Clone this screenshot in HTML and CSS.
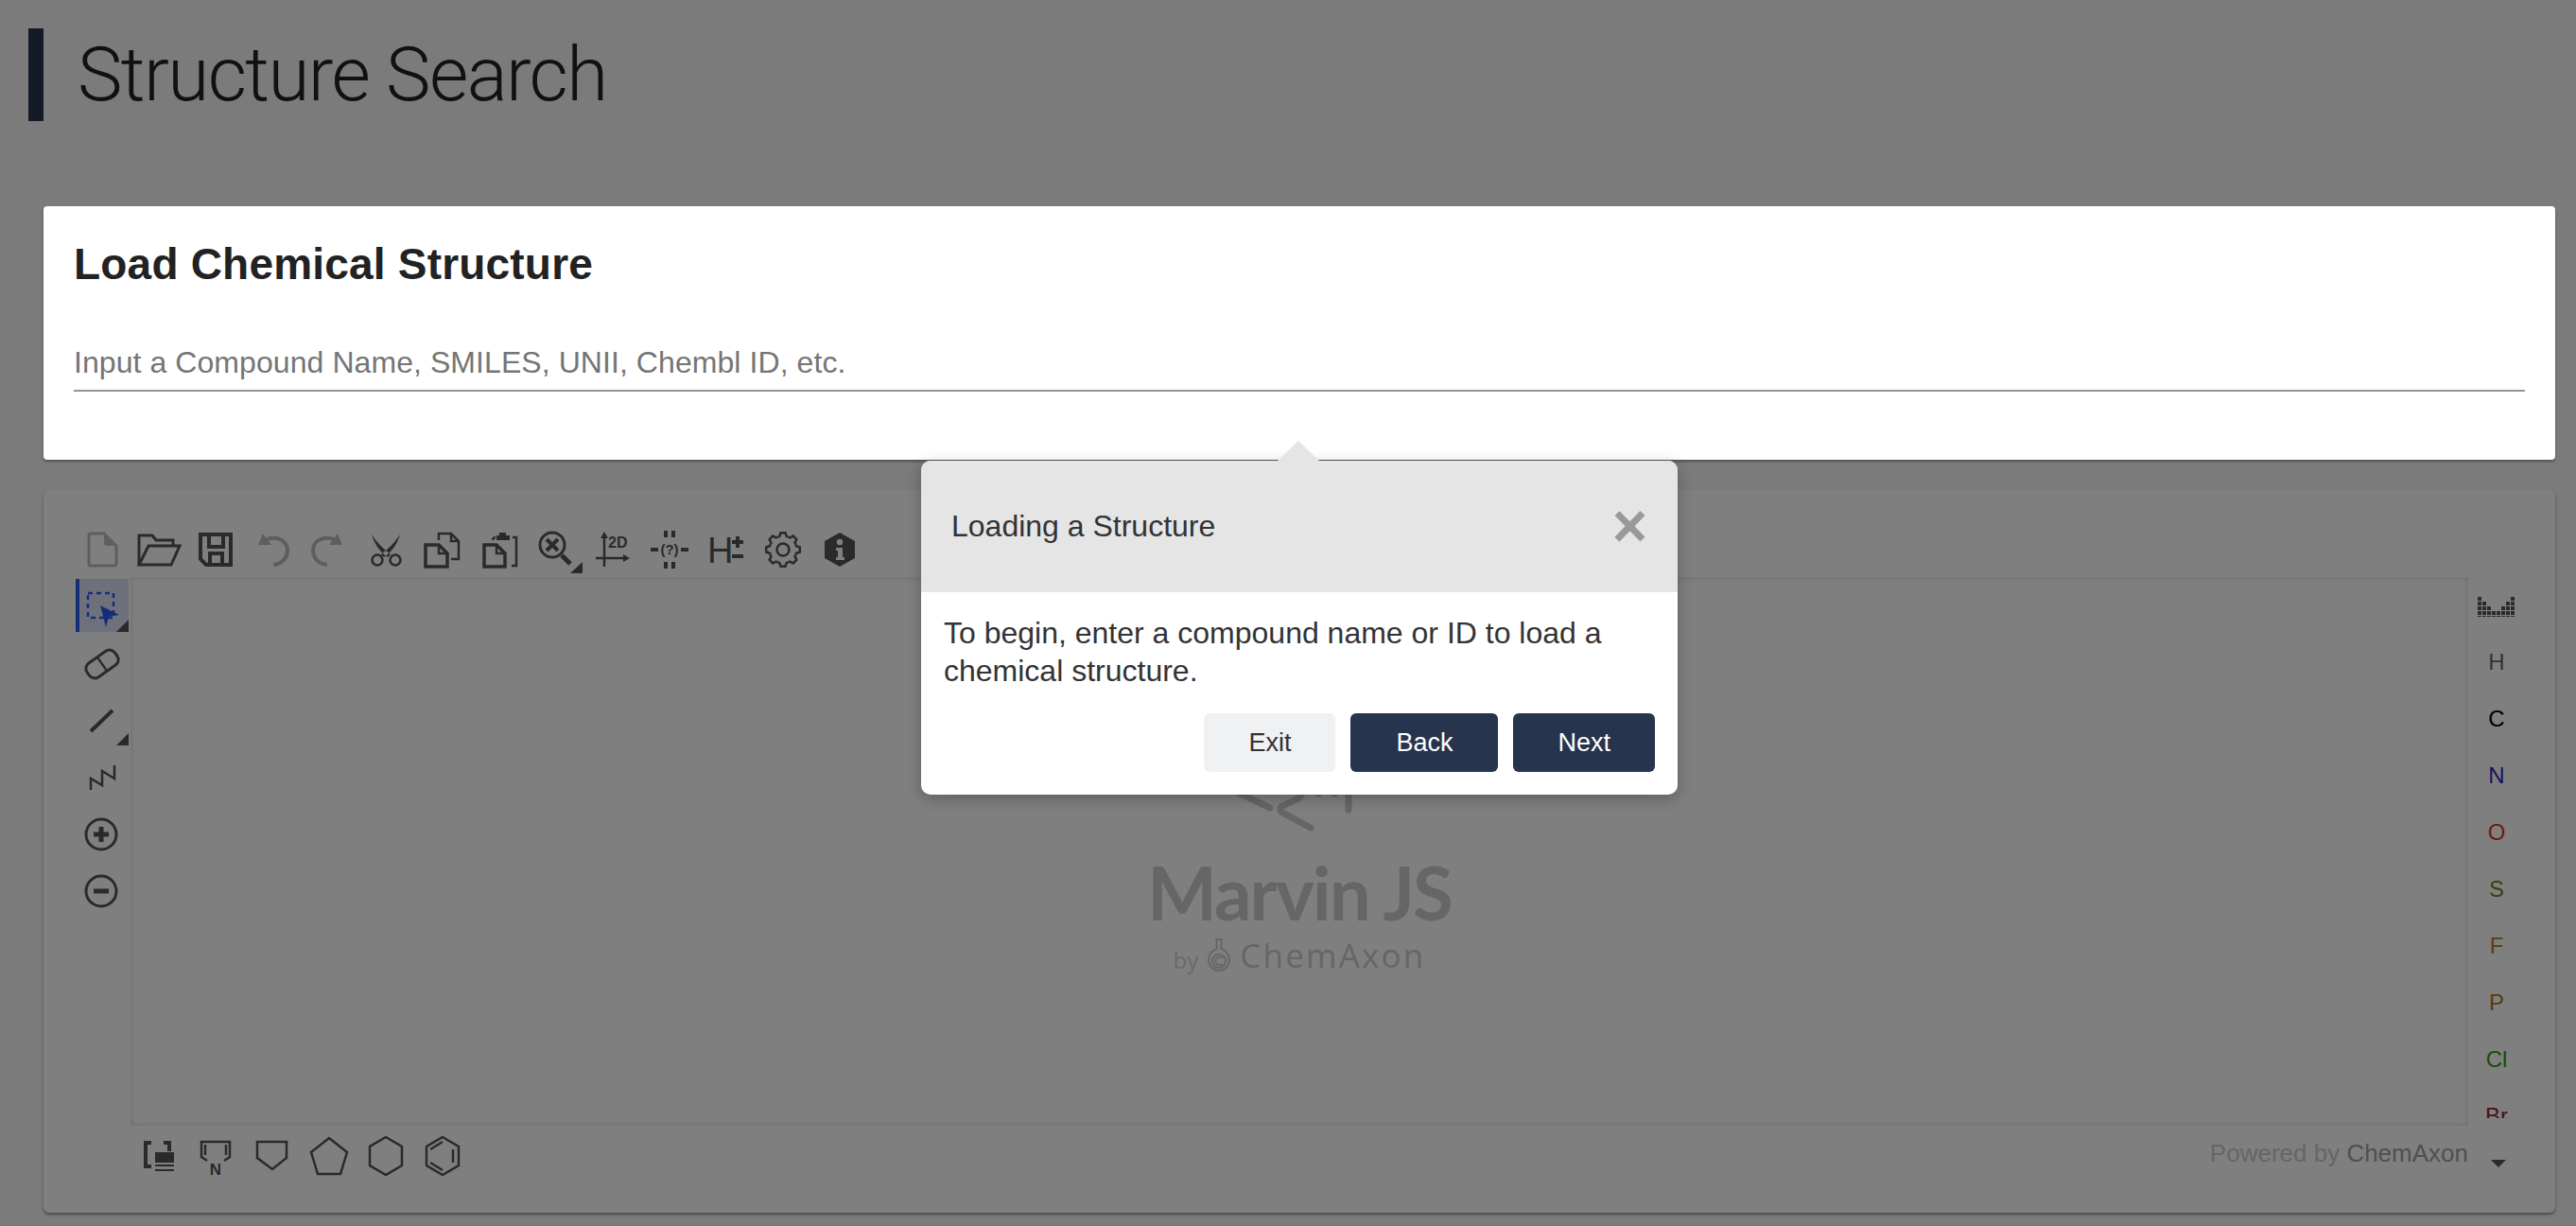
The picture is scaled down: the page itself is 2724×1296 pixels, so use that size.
FILE: index.html
```html
<!DOCTYPE html>
<html lang="en">
<head>
    <meta charset="UTF-8">
    <title>Structure Search</title>
    <link rel="stylesheet" href="styles.css">
</head>
<body>
    <h1 class="page-title">Structure Search</h1>

    <div class="load-card">
        <h2>Load Chemical Structure</h2>
        <div class="load-input">Input a Compound Name, SMILES, UNII, Chembl ID, etc.</div>
    </div>

    <div class="editor">
        <div class="top-tools">
            <svg class="cell" viewBox="0 0 60 60"><path class="ic off" d="M16 16a2 2 0 0 1 2-2h14l13 13v19a2 2 0 0 1-2 2H18a2 2 0 0 1-2-2z"/><path class="solid off" d="M32 14l13 13H35a3 3 0 0 1-3-3z"/></svg>
            <svg class="cell" viewBox="0 0 60 60"><path class="ic" d="M9 47V16h14l4 5h18v5M9 47l10-20h33l-9 20z"/></svg>
            <svg class="cell" viewBox="0 0 60 60"><path class="ic thick" d="M14 15h32v32H20l-6-6zM23 15v13h15V15M24 47V35h13v12"/></svg>
            <svg class="cell" viewBox="0 0 60 60"><path class="ic thick off" d="M31 47c11-1 15-9 15-15 0-10-10-16-22-12"/><path class="solid off" d="M15 26l5-12 9 12z"/></svg>
            <svg class="cell" viewBox="0 0 60 60"><g transform="matrix(-1 0 0 1 59 0)"><path class="ic thick off" d="M31 47c11-1 15-9 15-15 0-10-10-16-22-12"/><path class="solid off" d="M15 26l5-12 9 12z"/></g></svg>
            <svg class="cell" viewBox="0 0 60 60"><circle class="ic thin" cx="21" cy="42" r="5.500"/><circle class="ic thin" cx="40" cy="42" r="5.500"/><path class="solid" d="M15 15c5 8 12 15 20 21l-3 3c-8-5-14-14-17-24zM45 15c-5 8-12 15-20 21l3 3c8-5 14-14 17-24z"/></svg>
            <svg class="cell" viewBox="0 0 60 60"><path class="ic thin" d="M26 21v-7h13l8 8v19h-8M39 14v8h8"/><path class="ic mid" d="M12 26h14l9 9v14H12z"/><path class="ic thin" d="M26 26v9h9"/></svg>
            <svg class="cell" viewBox="0 0 60 60"><path class="ic thin" d="M44 18h4v30h-5M23 21c0-2 2-3 3-3"/><path class="solid" d="M27 16h3v-3h7v3h4v5H27z"/><path class="ic mid" d="M14 26h13l9 9v14H14z"/><path class="ic thin" d="M27 26v9h9"/></svg>
            <svg class="cell wide" viewBox="0 0 60 60"><circle class="ic" cx="26" cy="26" r="13"/><path class="ic thick" d="M20 20l12 12M32 20L20 32"/><path class="ic fat" d="M36 37l9 9"/><path class="solid" d="M45 56h13V44z"/></svg>
            <svg class="cell" viewBox="0 0 60 60"><path class="ic thin" d="M21 18v31M12 40h31"/><path class="solid" d="M21 12l-4 7h8zM48 40l-7-4v8z"/><text class="ic-text two-d" x="25" y="29">2D</text></svg>
            <svg class="cell" viewBox="0 0 60 60"><path class="solid" d="M24 11h4v7h-4zM32 11h4v7h-4zM24 44h4v7h-4zM32 44h4v7h-4zM10 29h8v4h-8zM42 29h8v4h-8z"/><text class="ic-text unknown" x="30" y="36" text-anchor="middle">(?)</text></svg>
            <svg class="cell" viewBox="0 0 60 60"><text class="ic-text hydrogen" x="10" y="45">H</text><path class="solid" d="M40 17h4v4h4v4h-4v4h-4v-4h-4v-4h4zM36 36h12v4H36z"/></svg>
            <svg class="cell" viewBox="0 0 60 60"><g transform="translate(30 31)"><circle class="ic thin" r="6.500"/><g id="tooth"><polyline class="ic thin" points="-5.500,-13.400 -3.750,-14 -2.500,-17.800 2.500,-17.800 3.750,-14 5.500,-13.400"/></g><use href="#tooth" transform="rotate(45)"/><use href="#tooth" transform="rotate(90)"/><use href="#tooth" transform="rotate(135)"/><use href="#tooth" transform="rotate(180)"/><use href="#tooth" transform="rotate(225)"/><use href="#tooth" transform="rotate(270)"/><use href="#tooth" transform="rotate(315)"/></g></svg>
            <svg class="cell" viewBox="0 0 60 60"><path class="solid" d="M30 13l16 9v18l-16 9-16-9V22z"/><circle class="blank" cx="30" cy="23" r="3.200"/><path class="blank" d="M26 29h7v10h2v3H26v-3h2v-7h-2z"/></svg>
        </div>

        <div class="left-tools">
            <div class="left-tool active">
                <svg viewBox="0 0 56 56"><rect class="dash" x="13" y="15" width="27" height="26"/><path class="arrow" d="M26 28l20 10-11 2-3 11z"/><path class="solid" d="M43 56h13V43z"/></svg>
            </div>
            <div class="left-tool">
                <svg viewBox="0 0 56 56"><g transform="rotate(-35 28 30)"><rect class="ic" x="10" y="21" width="36" height="18" rx="7"/><path class="ic thin" d="M28 21v18"/></g></svg>
            </div>
            <div class="left-tool">
                <svg viewBox="0 0 56 56"><path class="ic thick" d="M16 41l23-22"/><path class="solid" d="M43 56h13V43z"/></svg>
            </div>
            <div class="left-tool">
                <svg viewBox="0 0 56 56"><path class="ic thin" d="M16 43V31l12 7V23l13 8V17"/></svg>
            </div>
            <div class="left-tool">
                <svg viewBox="0 0 56 56"><circle class="ic" cx="27" cy="30" r="16"/><path class="ic fat" d="M19 30h16M27 22v16"/></svg>
            </div>
            <div class="left-tool">
                <svg viewBox="0 0 56 56"><circle class="ic" cx="27" cy="30" r="16"/><path class="ic fat" d="M19 30h16"/></svg>
            </div>
        </div>

        <div class="canvas">
            <svg class="logo-mark" viewBox="0 0 148 50"><path class="logo-line" d="M6 6l37 18M86 45L56 29c-3-2-3-5 0-7l17-8c3-2 4-5 4-8M126 6v20"/><circle class="logo-dot" cx="94" cy="9" r="3.500"/><circle class="logo-dot" cx="111" cy="9" r="3.500"/></svg>
            <div class="logo-name">Marvin JS</div>
            <div class="logo-by">
                <span class="by">by</span>
                <svg class="flask" viewBox="0 0 24 36"><path class="flask-line" d="M8 1h8M9.500 1v10C4 13 1 18 1 23a11 11 0 0 0 22 0c0-5-3-10-8.500-12V1"/><circle class="flask-line" cx="12" cy="24" r="7"/><path class="flask-line" d="M15 21a4 4 0 1 0 0 6"/></svg>
                <span class="maker">ChemAxon</span>
            </div>
        </div>

        <div class="atoms">
            <div class="atom">
                <svg class="table-icon" viewBox="0 0 40 21"><path d="M2 0v21M7 5v16M12 10v11M17 15v6M22 15v6M27 10v11M32 5v16M37 0v21"/></svg>
            </div>
            <div class="atom el-h">H</div>
            <div class="atom el-c">C</div>
            <div class="atom el-n">N</div>
            <div class="atom el-o">O</div>
            <div class="atom el-s">S</div>
            <div class="atom el-f">F</div>
            <div class="atom el-p">P</div>
            <div class="atom el-cl">Cl</div>
            <div class="atom el-br">Br</div>
        </div>

        <div class="bottom-bar">
            <div class="bottom-tools">
                <svg class="cell" viewBox="0 0 60 60"><path class="ic thick" d="M22 16h-6v25h6M35 16h6v9"/><path class="solid" d="M26 26h20v11H26zM26 39h20v2H26zM26 44h20v2H26z"/></svg>
                <svg class="cell" viewBox="0 0 60 60"><path class="ic thin" d="M21 35l-6-4V15h30v16l-6 4M19 18v11M41 18v11"/><text class="ic-text nitrogen" x="30" y="50" text-anchor="middle">N</text></svg>
                <svg class="cell" viewBox="0 0 60 60"><path class="ic thin" d="M14 15h31v17L30 44 14 32z"/></svg>
                <svg class="cell" viewBox="0 0 60 60"><path class="ic thin" d="M30 11l19 15-7 23H18l-7-23z"/></svg>
                <svg class="cell" viewBox="0 0 60 60"><path class="ic thin" d="M30 10l17 10v20L30 50 13 40V20z"/></svg>
                <svg class="cell" viewBox="0 0 60 60"><path class="ic thin" d="M30 10l17 10v20L30 50 13 40V20zM41 23v14M17 23l13-8M17 37l13 8"/></svg>
            </div>
            <div class="powered">Powered by <span>ChemAxon</span></div>
        </div>
        <div class="atoms-more"><span class="down"></span></div>
    </div>

    <div class="backdrop"></div>

    <div class="tour-popover">
        <div class="tour-header">
            <span>Loading a Structure</span>
            <span class="tour-close">×</span>
        </div>
        <div class="tour-body">To begin, enter a compound name or ID to load a chemical structure.</div>
        <div class="tour-actions">
            <button class="btn-light">Exit</button>
            <button class="btn-dark btn-back">Back</button>
            <button class="btn-dark">Next</button>
        </div>
    </div>
</body>
</html>
```

FILE: styles.css
```css
* {
    box-sizing: border-box;
}
body {
    font-family: "Liberation Sans", Arial, sans-serif;
    background: #f6f6f6;
    margin: 0;
    height: 1296px;
    overflow: hidden;
    position: relative;
}
.page-title {
    margin: 30px 0 0 30px;
    height: 98px;
    line-height: 98px;
    padding-left: 36px;
    border-left: 16px solid #27344d;
    font-family: Roboto, "Liberation Sans", sans-serif;
    font-size: 80px;
    font-weight: 300;
    letter-spacing: -1.600px;
    color: #222;
}
.load-card {
    position: relative;
    z-index: 2;
    height: 268px;
    margin: 90px 22px 0 46px;
    padding: 33px 32px 0;
    background: #fff;
    border-radius: 4px;
    box-shadow: 0 2px 3px rgba(0, 0, 0, 0.35);
}
.load-card h2 {
    margin: 0;
    font-size: 46px;
    line-height: 56px;
    letter-spacing: 0.200px;
    color: #222;
}
.load-input {
    margin-top: 56px;
    height: 51px;
    line-height: 40px;
    font-size: 32px;
    letter-spacing: 0.070px;
    color: #757575;
    border-bottom: 2px solid #949494;
}
.editor {
    display: grid;
    grid-template-columns: 92px 1fr 92px;
    grid-template-rows: 92px 580px 92px;
    height: 764px;
    margin: 32px 22px 0 46px;
    background: #fff;
    border-radius: 6px;
    box-shadow: 0 2px 3px rgba(0, 0, 0, 0.4);
}
.top-tools {
    grid-column: 1 / 4;
    display: flex;
    align-items: flex-end;
    padding-left: 32px;
}
.cell {
    width: 60px;
    height: 60px;
    flex: none;
}
.wide {
    overflow: visible;
}
.ic {
    fill: none;
    stroke: #555;
    stroke-width: 3;
}
.thin {
    stroke-width: 2.500;
}
.mid {
    stroke-width: 3.500;
}
.thick {
    stroke-width: 4;
}
.fat {
    stroke-width: 5;
}
.solid {
    fill: #555;
}
.blank {
    fill: #fff;
}
.ic.off {
    stroke: #bdbdbd;
}
.solid.off {
    fill: #bdbdbd;
}
.ic-text {
    fill: #555;
    font-weight: 700;
}
.two-d {
    font-size: 16px;
}
.unknown {
    font-size: 15px;
}
.hydrogen {
    font-size: 38px;
    font-weight: 400;
}
.nitrogen {
    font-size: 17px;
}
.left-tools {
    grid-column: 1;
    grid-row: 2;
    padding-left: 34px;
}
.left-tool {
    width: 56px;
    height: 56px;
    margin: 2px 0 4px;
}
.left-tool svg {
    display: block;
    width: 56px;
    height: 56px;
}
.active {
    background: #dde3f8;
    border-left: 4px solid #2a5cf0;
}
.active svg {
    margin-left: -4px;
}
.dash {
    fill: none;
    stroke: #2a5cf0;
    stroke-width: 2.500;
    stroke-dasharray: 5 4;
}
.arrow {
    fill: #2a5cf0;
}
.canvas {
    grid-column: 2;
    grid-row: 2;
    display: flex;
    flex-direction: column;
    align-items: center;
    padding-top: 220px;
    background: #fff;
    box-shadow: inset 0 0 6px rgba(0, 0, 0, 0.18);
    overflow: hidden;
}
.logo-mark {
    width: 148px;
    height: 50px;
    flex: none;
}
.logo-line {
    fill: none;
    stroke: #ccc;
    stroke-width: 7;
    stroke-linecap: round;
}
.logo-dot {
    fill: #ccc;
}
.logo-name {
    margin-top: 18px;
    font-family: Lato, "Open Sans", sans-serif;
    font-size: 78px;
    font-weight: 700;
    line-height: 90px;
    letter-spacing: -2px;
    color: #ccc;
}
.logo-by {
    display: flex;
    align-items: center;
    gap: 10px;
    color: #ccc;
}
.by {
    font-family: "Open Sans", sans-serif;
    font-size: 24px;
    margin-top: 8px;
    color: #d4d4d4;
}
.flask {
    width: 24px;
    height: 36px;
}
.flask-line {
    fill: none;
    stroke: #ccc;
    stroke-width: 2;
}
.maker {
    font-family: "Open Sans", sans-serif;
    font-size: 35px;
    line-height: 44px;
    letter-spacing: 2.200px;
}
.atoms {
    grid-column: 3;
    grid-row: 2;
    height: 572px;
    overflow: hidden;
}
.atom {
    height: 60px;
    line-height: 60px;
    width: 60px;
    text-align: center;
    font-size: 24px;
}
.atom:first-child {
    padding: 21px 0 0 10px;
}
.table-icon {
    width: 40px;
    height: 21px;
    display: block;
}
.table-icon path {
    fill: none;
    stroke: #555;
    stroke-width: 4;
    stroke-dasharray: 4 1;
}
.el-h { color: #666; }
.el-c { color: #000; }
.el-n { color: #2a2ab8; }
.el-o { color: #e03030; }
.el-s { color: #7a7a18; }
.el-f { color: #b87a20; }
.el-p { color: #b87018; }
.el-cl { color: #2f9a20; }
.el-br { color: #90282c; }
.bottom-bar {
    grid-column: 2;
    grid-row: 3;
    display: flex;
    justify-content: space-between;
    align-items: flex-start;
}
.bottom-tools {
    display: flex;
    padding-top: 2px;
}
.powered {
    padding-top: 14px;
    font-size: 26px;
    line-height: 30px;
    color: #ccc;
}
.powered span {
    color: #a0a0a0;
}
.atoms-more {
    grid-column: 3;
    grid-row: 3;
    padding: 36px 0 0 24px;
}
.down {
    display: block;
    width: 0;
    height: 0;
    border-left: 8px solid transparent;
    border-right: 8px solid transparent;
    border-top: 8px solid #555;
}
.backdrop {
    position: absolute;
    inset: 0;
    z-index: 1;
    background: rgba(0, 0, 0, 0.5);
}
.tour-popover {
    position: absolute;
    z-index: 3;
    left: 974px;
    top: 487px;
    width: 800px;
    height: 353px;
    background: #fff;
    border-radius: 10px;
    box-shadow: 0 4px 16px rgba(0, 0, 0, 0.25);
}
.tour-popover::before {
    content: "";
    position: absolute;
    left: 377px;
    top: -21px;
    border-left: 22px solid transparent;
    border-right: 22px solid transparent;
    border-bottom: 21px solid #e5e5e5;
}
.tour-header {
    display: flex;
    justify-content: space-between;
    align-items: center;
    height: 139px;
    padding: 0 32px;
    background: #e5e5e5;
    border-radius: 10px 10px 0 0;
    font-size: 32px;
    color: #333;
}
.tour-close {
    margin-top: -2px;
    font-size: 64px;
    font-weight: 700;
    line-height: 56px;
    color: #999;
}
.tour-body {
    padding: 23px 24px 0 24px;
    font-size: 32px;
    line-height: 40px;
    color: #333;
}
.tour-actions {
    display: flex;
    justify-content: flex-end;
    gap: 16px;
    margin-top: 25px;
    padding-right: 24px;
}
.tour-actions button {
    height: 62px;
    padding: 0 47px;
    border: 0;
    border-radius: 6px;
    font-family: inherit;
    font-size: 27px;
}
.tour-actions .btn-back {
    padding: 0 48px;
}
.btn-light {
    background: #f0f1f3;
    color: #333;
}
.btn-dark {
    background: #27344d;
    color: #fff;
}
```
